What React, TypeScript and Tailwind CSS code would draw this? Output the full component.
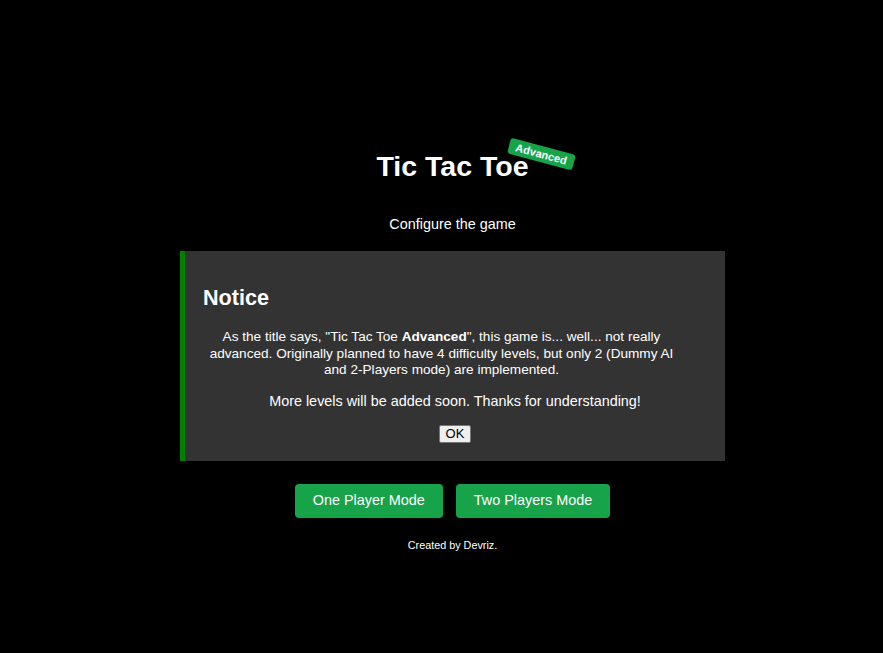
import React from "react";

export default function App() {
  return (
    <div
      className="w-full min-h-[653px] bg-black text-white flex flex-col items-center pl-[22px]"
      style={{ fontFamily: '"Liberation Sans", Arial, sans-serif' }}
    >
      <div className="relative mt-[150px]">
        <h1 className="text-[28.5px] leading-[33px] font-bold">Tic Tac Toe</h1>
        <span className="absolute left-[132px] top-[-4px] rotate-[15deg] bg-[#16a34a] text-white text-[11px] font-bold leading-[16px] px-[7px] rounded-[3px] whitespace-nowrap">
          Advanced
        </span>
      </div>
      <p className="mt-[33px] text-[14.4px] leading-[16.5px]">Configure the game</p>

      <div className="mt-[18.5px] w-[545px] bg-[#333333] border-l-[5px] border-[#008000] pt-[34px] pb-[18px] px-[18px] flex flex-col">
        <h2 className="text-[21.6px] leading-[25px] font-bold">Notice</h2>
        <p className="mt-[19px] w-[477px] text-center text-[13.6px] leading-[16.5px]">
          As the title says, "Tic Tac Toe <b>Advanced</b>", this game is... well... not really advanced. Originally
          planned to have 4 difficulty levels, but only 2 (Dummy AI and 2-Players mode) are implemented.
        </p>
        <p className="mt-[14.5px] text-center text-[14.4px] leading-[16.5px]">
          More levels will be added soon. Thanks for understanding!
        </p>
        <div className="mt-[15px] flex justify-center">
          <button className="h-[18px] px-[6px] bg-[#efefef] border border-[#767676] rounded-[2px] text-black text-[13px] leading-[16px]">
            OK
          </button>
        </div>
      </div>

      <div className="mt-[23px] flex gap-[13px]">
        <button className="h-[34px] px-[18px] bg-[#16a34a] text-white text-[14.4px] rounded-[4px]">
          One Player Mode
        </button>
        <button className="h-[34px] px-[18px] bg-[#16a34a] text-white text-[14.4px] rounded-[4px]">
          Two Players Mode
        </button>
      </div>

      <p className="mt-[21px] text-[10.8px] leading-[12.5px]">Created by Devriz.</p>
    </div>
  );
}
